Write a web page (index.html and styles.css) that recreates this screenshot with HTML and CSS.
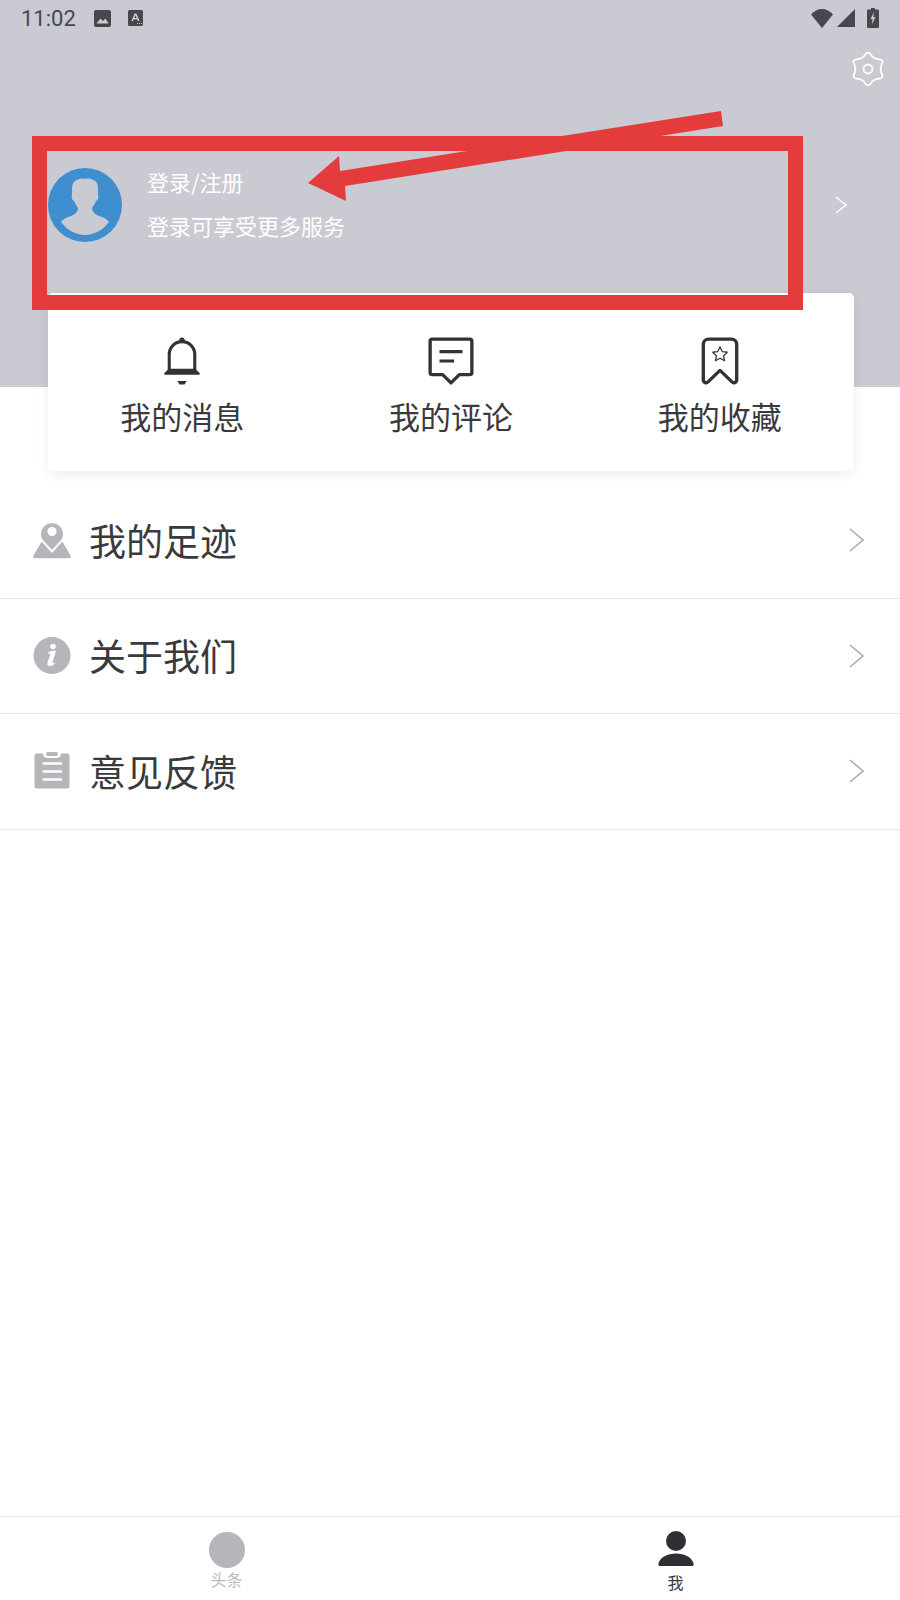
FILE: index.html
```html
<!DOCTYPE html>
<html lang="zh-CN">
<head>
  <meta charset="UTF-8" />
  <meta name="viewport" content="width=device-width, initial-scale=1.0"/>
  <title>我的</title>
  <link rel="stylesheet" href="styles.css">
</head>
<body>

  <div class="page">

    <header class="top">
      <div class="status">
        <span class="time">11:02</span>
        <svg class="st-pic" viewBox="0 0 17 17">
          <rect width="17" height="17" rx="2" fill="#47484d"/>
          <path d="M2.500 13.500 6.500 8.500 9 11 11.500 8.500 14.500 13.500Z" fill="#c9cad2"/>
        </svg>
        <svg class="st-a" viewBox="0 0 15 16">
          <rect width="15" height="16" rx="1.500" fill="#47484d"/>
          <path d="M3.500 11 6.700 3.500H8.300L11.500 11H10L9.300 9.200H5.700L5 11ZM6.200 7.900H8.800L7.500 4.900Z" fill="#dcdde2"/>
          <path d="M9 13.500h1M11 13.500h1M13 13.500h1" stroke="#c9cad2"/>
        </svg>
        <div class="st-right">
          <svg class="st-wifi" viewBox="0 0 22 19"><path d="M0 5.500C3 2 7 0 11 0s8 2 11 5.500L11 19Z" fill="#47484d"/></svg>
          <svg class="st-signal" viewBox="0 0 18 18"><path d="M18 0V18H0Z" fill="#47484d"/></svg>
          <svg class="st-batt" viewBox="0 0 12 20">
            <path d="M4 0H8V1.500H11a1 1 0 0 1 1 1V19a1 1 0 0 1-1 1H1a1 1 0 0 1-1-1V2.500a1 1 0 0 1 1-1H4Z" fill="#47484d"/>
            <path d="M7 4 3.500 11H5.500L4.800 16.500 8.500 9H6.300Z" fill="#c9cad2"/>
          </svg>
        </div>
      </div>

      <div class="tools">
        <svg class="gear" viewBox="-17 -17 34 34">
          <path d="M-2.875-14.230Q0-18.500 2.875-14.230T10.885-9.605T13.760-4.625T13.760 4.625T10.885 9.605T2.875 14.230T-2.875 14.230T-10.885 9.605T-13.760 4.625T-13.760-4.625T-10.885-9.605T-2.875-14.230Z" fill="none" stroke="#fff" stroke-width="1.800"/>
          <circle r="4.500" fill="none" stroke="#fff" stroke-width="1.800"/>
        </svg>
      </div>

      <div class="user">
        <svg class="avatar" viewBox="0 0 74 74">
          <circle cx="37" cy="37" r="37" fill="#3f8fd0"/>
          <path d="M37 11c4-1 6 0 8 1 4 1 5 5 5 10l0 5c1 2 0 5-2 6-1 3-3 5-4 7 0 4 3 6 7 8 4 1 8 3 10 6-6 8-15 13-24 13s-18-5-24-13c2-3 6-5 10-6 4-2 7-4 7-8-1-2-3-4-4-7-2-1-3-4-2-6l0-5c0-5 1-9 5-10 2-1 4-2 8-1Z" fill="#c9cad2"/>
        </svg>
        <div class="user-text">
          <div>登录/注册</div>
          <div>登录可享受更多服务</div>
        </div>
        <svg class="user-arrow" viewBox="0 0 12 18"><path d="M1 1 11 9 1 17" fill="none" stroke="#fff" stroke-width="1.500"/></svg>
      </div>
    </header>

    <section class="card">
      <div class="card-item">
        <svg class="card-icon" width="38" height="48" viewBox="1 0 35 47">
          <circle cx="18.500" cy="3" r="2.600" fill="#333"/>
          <path d="M6 34V17a12.500 12.500 0 0 1 25 0V34" fill="none" stroke="#333" stroke-width="3"/>
          <path d="M2 36H35L31 32H6Z" fill="#333" stroke="#333" stroke-width="2" stroke-linejoin="round"/>
          <path d="M14 43H23L21 46.500H16Z" fill="#333"/>
        </svg>
        <span>我的消息</span>
      </div>
      <div class="card-item">
        <svg class="card-icon" width="46" height="48" viewBox="1 1 44 46">
          <path d="M5 3H41a2 2 0 0 1 2 2V35a2 2 0 0 1-2 2H31L23 45 15 37H5a2 2 0 0 1-2-2V5a2 2 0 0 1 2-2Z" fill="none" stroke="#333" stroke-width="3.200" stroke-linejoin="round"/>
          <path d="M12 15H34M12 24H26" stroke="#333" stroke-width="3"/>
        </svg>
        <span>我的评论</span>
      </div>
      <div class="card-item">
        <svg class="card-icon" width="38" height="48" viewBox="1 1 36 46">
          <path d="M8 3H30a5 5 0 0 1 5 5V42c0 3-3 3.500-4.500 2L19 33 7.500 44C6 45.500 3 45 3 42V8a5 5 0 0 1 5-5Z" fill="none" stroke="#333" stroke-width="3.200" stroke-linejoin="round"/>
          <path d="M19 10.500 21.100 15 26 15.600 22.400 18.900 23.300 23.700 19 21.300 14.700 23.700 15.600 18.900 12 15.600 16.900 15Z" fill="none" stroke="#333" stroke-width="1.200" stroke-linejoin="round"/>
        </svg>
        <span>我的收藏</span>
      </div>
    </section>

    <ul class="menu">
      <li class="menu-row">
        <svg class="menu-icon" viewBox="0 0 38 38">
          <path d="M9 20H29L37.500 34.500a1.800 1.800 0 0 1-1.500 2.800H2A1.800 1.800 0 0 1 .5 34.500Z" fill="#b5b5ba"/>
          <path d="M19 30.500 8.500 19A12 12 0 1 1 29.500 19Z" fill="#b5b5ba" stroke="#fff" stroke-width="2"/>
          <circle cx="19" cy="10.500" r="4.500" fill="#fff"/>
        </svg>
        <span>我的足迹</span>
        <svg class="menu-arrow" viewBox="0 0 15 24"><path d="M1 1 14 12 1 23" fill="none" stroke="#aaa" stroke-width="1.500"/></svg>
      </li>
      <li class="menu-row">
        <svg class="menu-icon" viewBox="0 0 38 38">
          <circle cx="19" cy="18.500" r="18.500" fill="#b5b5ba"/>
          <circle cx="20" cy="9.500" r="2.800" fill="#fff"/>
          <path d="M14.500 15.500C17 14 20 13.500 23 14L19.500 25c-.3 1.200 1 1.300 3 0-1.200 2.500-3.500 4-5.500 4-2.500 0-3-1.500-2.500-3.500L17.500 17.500C16.500 16.800 15.500 16 14.500 15.500Z" fill="#fff"/>
        </svg>
        <span>关于我们</span>
        <svg class="menu-arrow" viewBox="0 0 15 24"><path d="M1 1 14 12 1 23" fill="none" stroke="#aaa" stroke-width="1.500"/></svg>
      </li>
      <li class="menu-row">
        <svg class="menu-icon" viewBox="0 0 38 38">
          <path d="M4 1.500H10C10 4.500 12 6 14 6H24C26 6 28 4.500 28 1.500H34a2.500 2.500 0 0 1 2.500 2.500V34a2.500 2.500 0 0 1-2.500 2.500H4A2.500 2.500 0 0 1 1.500 34V4A2.500 2.500 0 0 1 4 1.500Z" fill="#b5b5ba"/>
          <rect x="13" y="0" width="12" height="4" rx="2" fill="#b5b5ba"/>
          <path d="M9.500 11.500H29M9.500 19.500H29M9.500 27.500H29" stroke="#fff" stroke-width="2.500"/>
        </svg>
        <span>意见反馈</span>
        <svg class="menu-arrow" viewBox="0 0 15 24"><path d="M1 1 14 12 1 23" fill="none" stroke="#aaa" stroke-width="1.500"/></svg>
      </li>
    </ul>

    <nav class="tabs">
      <div class="tab tab-off">
        <div class="tab-dot"></div>
        <span>头条</span>
      </div>
      <div class="tab tab-on">
        <svg class="tab-icon" viewBox="0 0 36 36">
          <circle cx="18" cy="10" r="10" fill="#2f3033"/>
          <path d="M2 35C0 35 0 33 1 31 3 26 10 22.500 18 22.500S33 26 35 31C36 33 36 35 34 35Z" fill="#2f3033"/>
        </svg>
        <span>我</span>
      </div>
    </nav>

    <!-- red marks drawn over the screenshot -->
    <div class="mark-box"></div>
    <svg class="mark-arrow" viewBox="300 105 430 100">
      <path d="M721 111 723 126 345 186 346 201 308 183 339 156 340 171Z" fill="#e43c3d"/>
    </svg>

  </div>

</body>
</html>
```

FILE: styles.css
```css
* {
  margin: 0;
  padding: 0;
  box-sizing: border-box;
}

body {
  font-family: "Noto Sans CJK SC", "Noto Sans", sans-serif;
  background-color: #fff;
  color: #3a3a3c;
}

.page {
  position: relative;
  display: flex;
  flex-direction: column;
  height: 1600px;
  overflow: hidden;
}

.top {
  height: 387px;
  background-color: #c9cad2;
}

/* status bar */
.status {
  display: flex;
  align-items: center;
  height: 36px;
  padding: 0 21px;
}

.time {
  font-family: Roboto, sans-serif;
  font-size: 22px;
  color: #47484d;
}

.st-pic {
  width: 17px;
  height: 17px;
  margin-left: 18px;
}

.st-a {
  width: 15px;
  height: 16px;
  margin-left: 17px;
}

.st-right {
  display: flex;
  align-items: center;
  margin-left: auto;
}

.st-wifi {
  width: 22px;
  height: 19px;
}

.st-signal {
  width: 18px;
  height: 18px;
  margin-left: 4px;
}

.st-batt {
  width: 12px;
  height: 20px;
  margin-left: 12px;
}

.tools {
  display: flex;
  justify-content: flex-end;
  padding: 16px 15px 0 0;
}

.gear {
  width: 34px;
  height: 34px;
}

.user {
  display: flex;
  align-items: center;
  margin-top: 82px;
  padding: 0 53px 0 48px;
}

.avatar {
  width: 74px;
  height: 74px;
}

.user-text {
  margin: -5px 0 0 25px;
  font-size: 22px;
  line-height: 30px;
  color: #fff;
}

.user-text div + div {
  margin-top: 14px;
}

.user-arrow {
  width: 12px;
  height: 18px;
  margin-left: auto;
}

/* card over the header edge */
.card {
  display: grid;
  grid-template-columns: repeat(3, 1fr);
  width: 806px;
  height: 178px;
  margin: -94px 0 0 48px;
  background-color: #fff;
  border-radius: 5px;
  box-shadow: 0 3px 12px rgba(0, 0, 0, 0.08);
}

.card-item {
  display: flex;
  flex-direction: column;
  align-items: center;
  padding-top: 44px;
  font-size: 31px;
  line-height: 40px;
}

.card-icon {
  margin-bottom: 11px;
}

/* list */
.menu {
  list-style: none;
  margin-top: 12px;
}

.menu-row {
  display: flex;
  align-items: center;
  height: 115.5px;
  padding: 0 36px 0 33px;
  border-bottom: 1px solid #e8e8e8;
  font-size: 37px;
}

.menu-row span {
  margin-top: -1px;
}

.menu-icon {
  width: 38px;
  height: 38px;
  margin-right: 18px;
}

.menu-arrow {
  width: 15px;
  height: 24px;
  margin-left: auto;
}

/* bottom tabs */
.tabs {
  display: flex;
  height: 84px;
  margin-top: auto;
  padding-left: 2px;
  border-top: 1px solid #e8e8e8;
}

.tab {
  flex: 1;
  display: flex;
  flex-direction: column;
  align-items: center;
  font-size: 16px;
  line-height: 20px;
}

.tab-off {
  padding-top: 15px;
  color: #bbb;
}

.tab-on {
  padding-top: 14px;
  color: #3a3a3c;
}

.tab-dot {
  width: 36px;
  height: 36px;
  margin-bottom: 1px;
  background-color: #b5b5ba;
  border-radius: 50%;
}

.tab-icon {
  width: 36px;
  height: 36px;
  margin-bottom: 5px;
}

/* annotation */
.mark-box {
  position: absolute;
  top: 136px;
  left: 32px;
  width: 771px;
  height: 174px;
  border: 15px solid #e43c3d;
}

.mark-arrow {
  position: absolute;
  top: 105px;
  left: 300px;
  width: 430px;
  height: 100px;
}
```
